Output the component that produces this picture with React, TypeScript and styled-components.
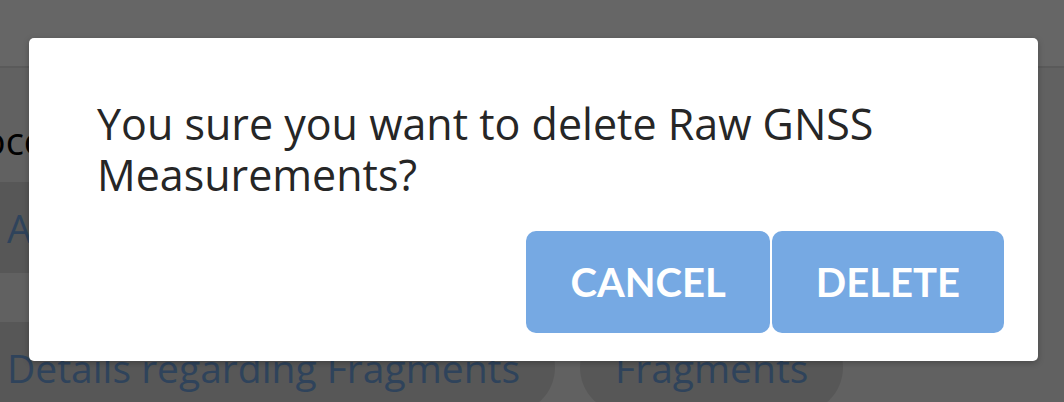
import styled, { createGlobalStyle } from 'styled-components';

const GlobalStyle = createGlobalStyle`
  html, body {
    margin: 0;
    padding: 0;
    background: #f2f2f2;
  }
  body {
    font-family: "Open Sans", Lato, "Liberation Sans", sans-serif;
  }
`;

const chipsTop = ['Accuracy', 'Satellites', 'Positioning'];
const chipsBottom = ['Details regarding Fragments', 'Fragments'];

export default function App() {
  return (
    <>
      <GlobalStyle />
      <Screen>
        <Page>
          <Header />
          <Body>
            <SectionTitle>Protocol</SectionTitle>
            <ChipRow $top={18}>
              {chipsTop.map((c) => (
                <Chip key={c}>{c}</Chip>
              ))}
            </ChipRow>
            <ChipRow $top={49}>
              {chipsBottom.map((c) => (
                <Chip key={c}>{c}</Chip>
              ))}
            </ChipRow>
          </Body>
        </Page>
        <Overlay>
          <Dialog>
            <Message>You sure you want to delete Raw GNSS Measurements?</Message>
            <Actions>
              <ActionButton>Cancel</ActionButton>
              <ActionButton>Delete</ActionButton>
            </Actions>
          </Dialog>
        </Overlay>
      </Screen>
    </>
  );
}

const Screen = styled.div`
  position: relative;
  width: 1064px;
  height: 402px;
  overflow: hidden;
`;

const Page = styled.div`
  display: flex;
  flex-direction: column;
  height: 100%;
`;

const Header = styled.div`
  height: 66px;
  background: #ffffff;
  border-bottom: 2px solid #e2e2e2;
  flex-shrink: 0;
`;

const Body = styled.div`
  display: flex;
  flex-direction: column;
  background: #f2f2f2;
  flex: 1;
`;

const SectionTitle = styled.div`
  font-size: 38px;
  color: #000;
  height: 48px;
  line-height: 48px;
  margin-top: 48px;
  margin-left: -92px;
`;

const ChipRow = styled.div<{ $top: number }>`
  display: flex;
  flex-shrink: 0;
  gap: 25px;
  margin-left: -120px;
  margin-top: ${(p) => p.$top}px;
`;

const Chip = styled.div`
  flex-shrink: 0;
  height: 91px;
  padding: 0 35px;
  border-radius: 46px;
  background: #d9d9d9;
  color: #76a9e3;
  font-size: 39px;
  display: flex;
  align-items: center;
  white-space: nowrap;
  &:first-child {
    padding-left: 127px;
  }
`;

const Overlay = styled.div`
  position: absolute;
  inset: 0;
  background: rgba(0, 0, 0, 0.6);
  display: flex;
  align-items: flex-start;
  justify-content: center;
  padding-top: 38px;
`;

const Dialog = styled.div`
  width: 1009px;
  height: 323px;
  box-sizing: border-box;
  margin-left: 3px;
  background: #ffffff;
  border-radius: 5px;
  padding: 60px 34px 28px 68px;
  display: flex;
  flex-direction: column;
  box-shadow: 0 2px 6px rgba(0, 0, 0, 0.25);
`;

const Message = styled.div`
  font-size: 43px;
  line-height: 51px;
  color: #262626;
  padding-right: 60px;
`;

const Actions = styled.div`
  margin-top: auto;
  display: flex;
  justify-content: flex-end;
  gap: 2px;
`;

const ActionButton = styled.button`
  height: 102px;
  padding: 0 44px;
  border: none;
  border-radius: 10px;
  background: #76a9e3;
  color: #ffffff;
  font-family: Lato, "Open Sans", "Liberation Sans", sans-serif;
  font-weight: 700;
  font-size: 40px;
  text-transform: uppercase;
  cursor: pointer;
`;
